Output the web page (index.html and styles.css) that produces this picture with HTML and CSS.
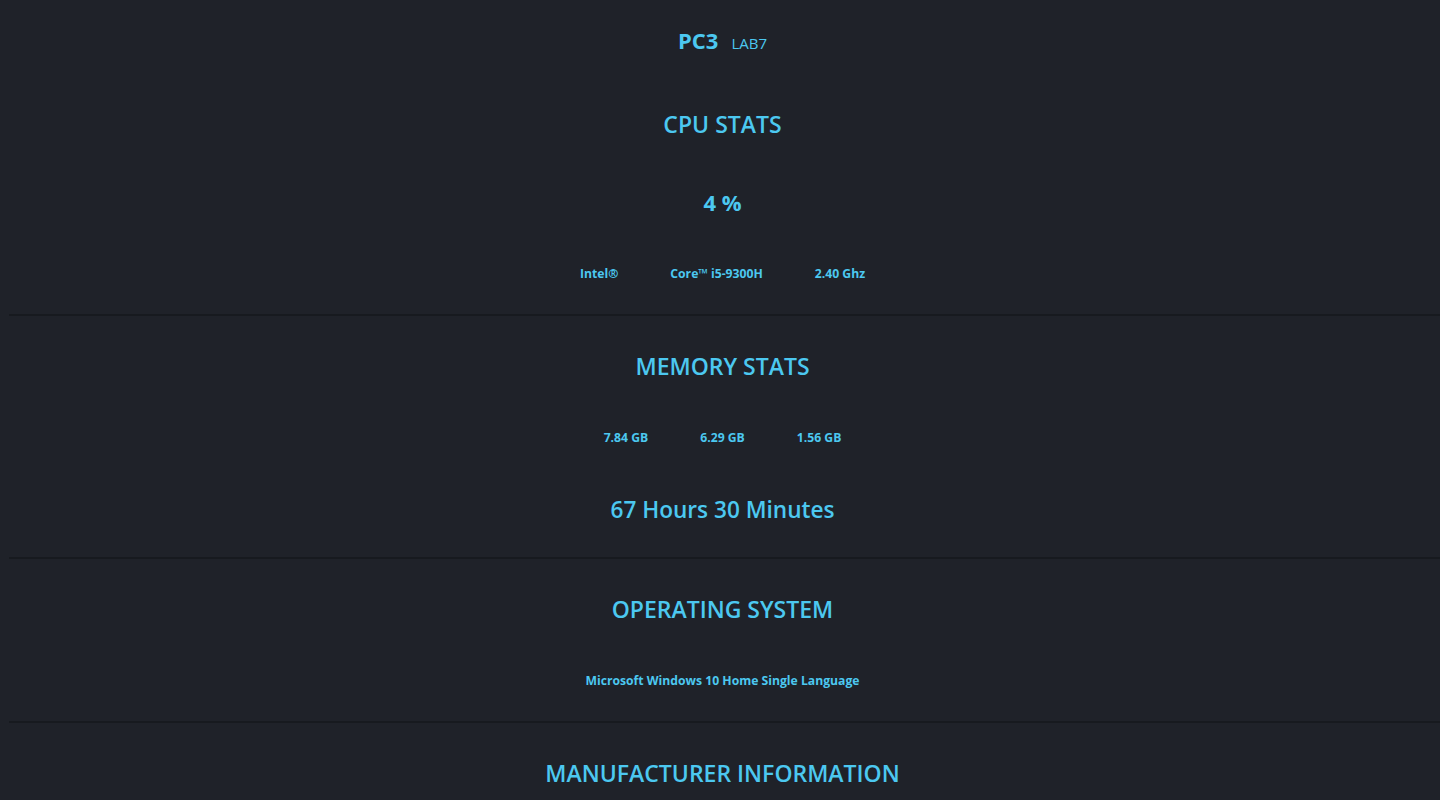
FILE: index.html
```html
<!DOCTYPE html>
<html lang="en">
<head>
    <meta charset="UTF-8">
    <meta name="viewport" content="width=device-width, initial-scale=1.0">
    <title>PC3 - LAB7</title>
    <link rel="stylesheet" href="styles.css">
</head>
<body>
    <div class="page">
        <header class="header">
            <span class="pc-name">PC3</span>
            <span class="lab-name">LAB7</span>
        </header>

        <!-- CPU -->
        <section class="section first">
            <h2>CPU STATS</h2>
            <div class="big-value">4 %</div>
            <div class="info-row">
                <span>Intel®</span>
                <span>Core™ i5-9300H</span>
                <span>2.40 Ghz</span>
            </div>
        </section>
        <div class="divider"></div>

        <!-- Memory -->
        <section class="section">
            <h2>MEMORY STATS</h2>
            <div class="info-row">
                <span>7.84 GB</span>
                <span>6.29 GB</span>
                <span>1.56 GB</span>
            </div>
            <div class="uptime">67 Hours 30 Minutes</div>
        </section>
        <div class="divider"></div>

        <!-- OS -->
        <section class="section">
            <h2>OPERATING SYSTEM</h2>
            <div class="info-row">
                <span>Microsoft Windows 10 Home Single Language</span>
            </div>
        </section>
        <div class="divider"></div>

        <section class="section">
            <h2>MANUFACTURER INFORMATION</h2>
        </section>
    </div>
</body>
</html>
```

FILE: styles.css
```css
body {
    margin: 0;
    padding: 0;
    background-color: #1f2229;
    color: #4cc8f0;
    font-family: "Open Sans", "Noto Sans", Arial, sans-serif;
    overflow: hidden;
}

.page {
    padding-left: 5px;
}

.header {
    margin-top: 25px;
    margin-bottom: 22px;
    height: 30px;
    display: flex;
    justify-content: center;
    align-items: baseline;
    gap: 13px;
    line-height: 30px;
}

.pc-name {
    font-size: 22px;
    font-weight: 700;
}

.lab-name {
    font-size: 15px;
}

.section {
    display: flex;
    flex-direction: column;
    align-items: center;
    gap: 47px;
    padding: 34px 0 31px;
}

.section.first {
    padding-top: 31px;
    padding-bottom: 31px;
}

h2 {
    margin: 0;
    font-size: 23px;
    font-weight: 600;
    line-height: 32px;
}

.big-value {
    font-size: 22px;
    font-weight: 700;
    line-height: 30px;
    margin-bottom: 1px;
}

.info-row {
    display: flex;
    justify-content: center;
    gap: 52px;
    font-size: 12.2px;
    font-weight: 700;
    line-height: 18px;
}

.uptime {
    font-size: 22.6px;
    font-weight: 600;
    line-height: 32px;
}

.divider {
    margin-left: 4px;
    height: 2px;
    background-color: #171a1f;
}
```
